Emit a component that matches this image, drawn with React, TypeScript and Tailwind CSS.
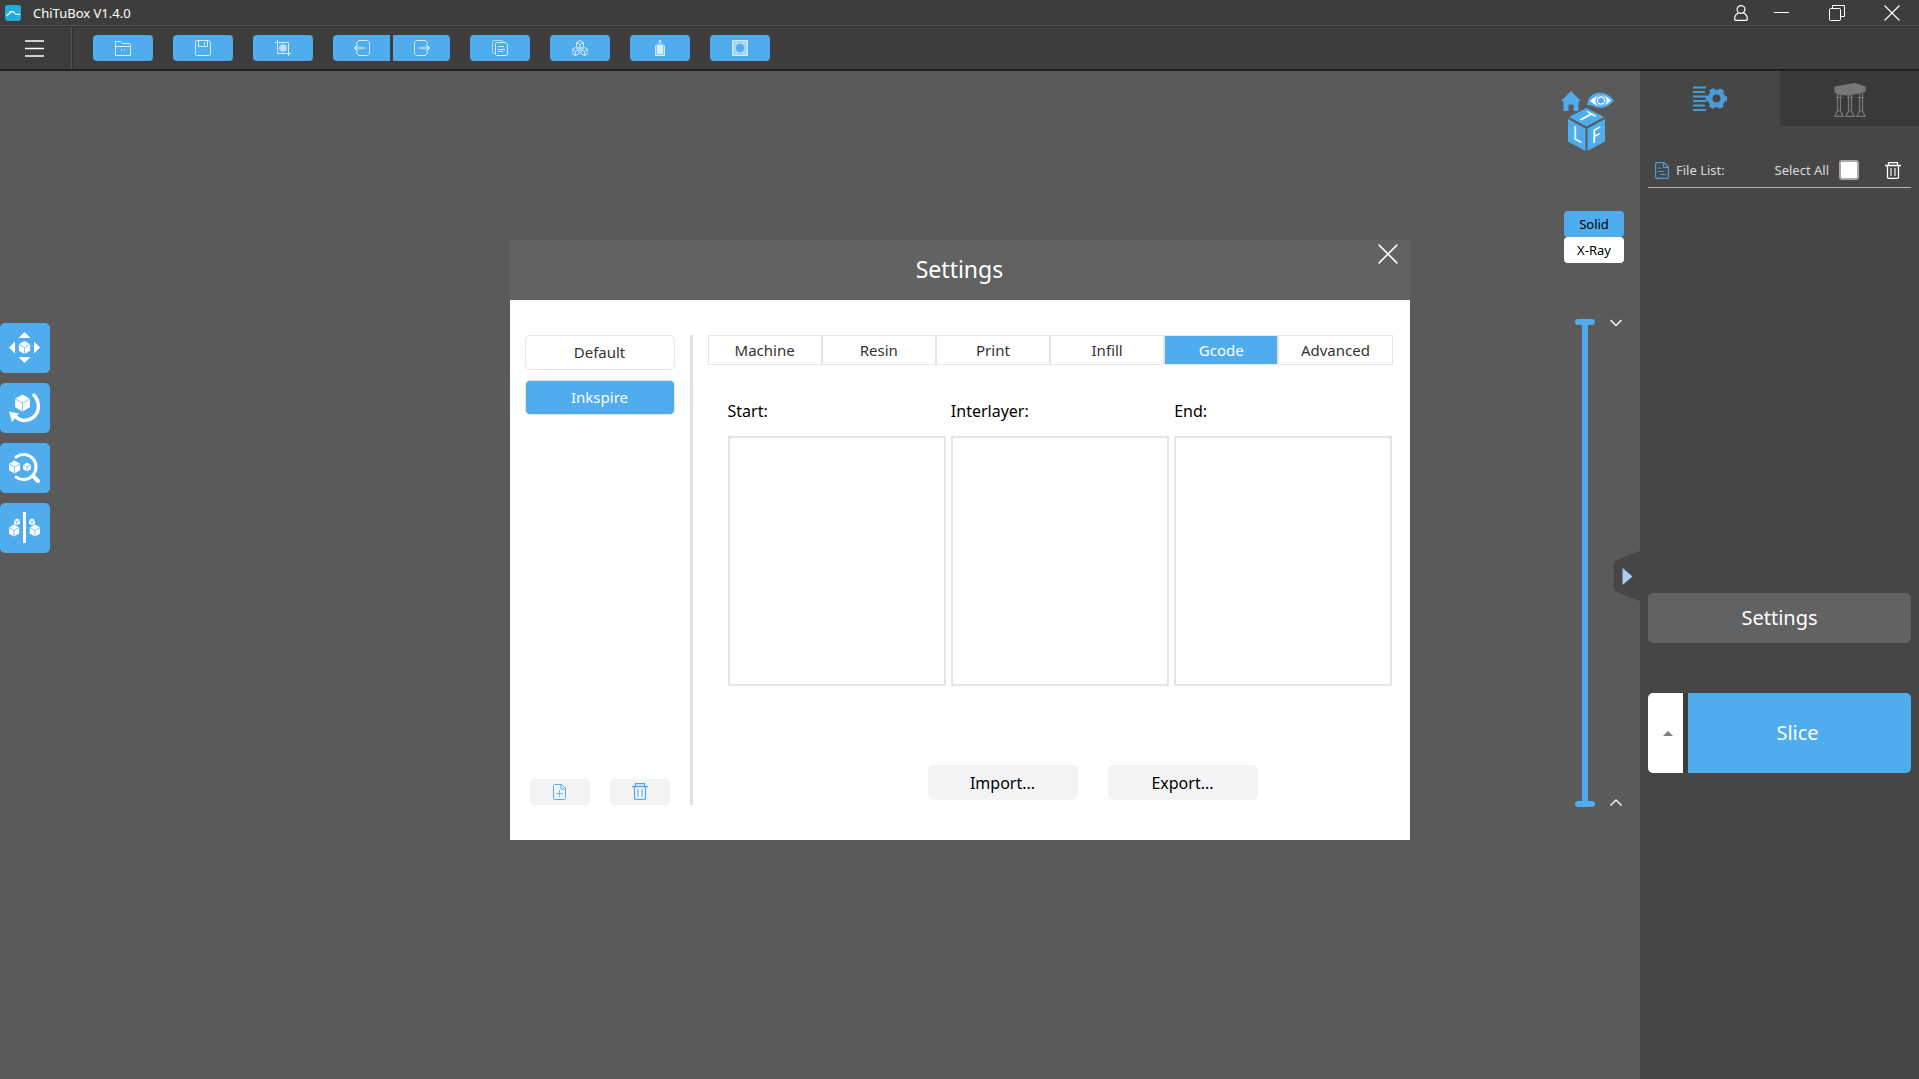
import clsx from 'clsx';
import { ReactNode, useState } from 'react';

const presets = ['Default', 'Inkspire'];
const settingsTabs = ['Machine', 'Resin', 'Print', 'Infill', 'Gcode', 'Advanced'];
const gcodeFields = [
  { id: 'start', label: 'Start:' },
  { id: 'interlayer', label: 'Interlayer:' },
  { id: 'end', label: 'End:' },
];

type IconProps = { className?: string };

// Solid cube seen from the corner, its edges cut out in the button colour
function Cube({ x, y, r, line = 0.7 }: { x: number; y: number; r: number; line?: number }) {
  const w = r * 0.87;
  const h = r / 2;
  return (
    <g>
      <path
        d={`M${x} ${y - r}L${x + w} ${y - h}V${y + h}L${x} ${y + r}L${x - w} ${y + h}V${y - h}Z`}
        fill="#fff"
      />
      <path
        d={`M${x - w} ${y - h}L${x} ${y}L${x + w} ${y - h}M${x} ${y}V${y + r}`}
        fill="none"
        stroke="#4fadee"
        strokeWidth={line}
      />
    </g>
  );
}

function WireCube({ x, y }: { x: number; y: number }) {
  return (
    <path
      d={`M${x} ${y - 4}L${x + 3.5} ${y - 2}V${y + 2}L${x} ${y + 4}L${x - 3.5} ${y + 2}V${y - 2}ZM${x - 3.5} ${y - 2}L${x} ${y}L${x + 3.5} ${y - 2}M${x} ${y}V${y + 4}`}
    />
  );
}

function ToolbarSvg({ children }: { children: ReactNode }) {
  return (
    <svg width="16" height="16" viewBox="0 0 16 16" fill="none" stroke="#d8edfb" strokeWidth="1">
      {children}
    </svg>
  );
}

const toolbarGroups = [
  [
    {
      label: 'Open',
      icon: (
        <ToolbarSvg>
          <path d="M.5 15.500V1.500H5.500L7.500 3.500H14.500L15.500 4.500V15.500ZM.5 6.500H15.500" />
          <path d="M6.500 9V11M9.500 9V11" opacity=".7" />
        </ToolbarSvg>
      ),
    },
  ],
  [
    {
      label: 'Save',
      icon: (
        <ToolbarSvg>
          <path d="M1.500 .5H13.500L15.500 2.500V14.500L14.500 15.500H1.500L.5 14.500V1.500Z" />
          <path d="M3.500 .5V6.500H12.500V.5M9.500 2V5" />
        </ToolbarSvg>
      ),
    },
  ],
  [
    {
      label: 'Screenshot',
      icon: (
        <ToolbarSvg>
          <path d="M2.500 0V13.500H16M0 2.500H13.500V16" />
          <path d="M8 4L11.500 6V10L8 12L4.500 10V6Z" fill="#c3e2f9" stroke="#9fd2f6" />
        </ToolbarSvg>
      ),
    },
  ],
  [
    {
      label: 'Undo',
      icon: (
        <ToolbarSvg>
          <path d="M2.500 4V2.500L4.500 .5H13.500L15.500 2.500V13.500L13.500 15.500H4.500L2.500 13.500V12" />
          <path d="M11 8H1M4 4.500L.5 8L4 11.500" strokeWidth="1.500" opacity=".8" />
        </ToolbarSvg>
      ),
    },
    {
      label: 'Redo',
      icon: (
        <ToolbarSvg>
          <path d="M13.500 4V2.500L11.500 .5H2.500L.5 2.500V13.500L2.500 15.500H11.500L13.500 13.500V12" />
          <path d="M5 8H15M12 4.500L15.500 8L12 11.500" strokeWidth="1.500" opacity=".8" />
        </ToolbarSvg>
      ),
    },
  ],
  [
    {
      label: 'Copy',
      icon: (
        <ToolbarSvg>
          <path d="M3.500 13.500H2L.5 12V1.500L1.500 .5H10L11.500 2" opacity=".75" />
          <path d="M4.500 2.500H13.500L15.500 4.500V14.500L14.500 15.500H4.500L3.500 14.500V3.500Z" />
          <path d="M6 6.500H12M6 9.500H13M6 11.500H11" />
        </ToolbarSvg>
      ),
    },
  ],
  [
    {
      label: 'Auto layout',
      icon: (
        <ToolbarSvg>
          <WireCube x={8} y={4.5} />
          <WireCube x={3.5} y={11.5} />
          <WireCube x={12.5} y={11.5} />
        </ToolbarSvg>
      ),
    },
  ],
  [
    {
      label: 'Hollow',
      icon: (
        <ToolbarSvg>
          <path d="M7 0H9V2H7Z" fill="#d8edfb" stroke="none" />
          <path d="M6 1.500H10V4H11.500L13 5.500V15.500H3V5.500L4.500 4H6Z" fill="#8ccaf4" stroke="none" />
          <path d="M5 5H11V14H5Z" fill="#d8edfb" stroke="none" />
          <path d="M3.500 6V15.500H12.500V6" />
        </ToolbarSvg>
      ),
    },
  ],
  [
    {
      label: 'Dig hole',
      icon: (
        <ToolbarSvg>
          <path d="M.5 .5H15.500V15.500H.5Z" fill="#a7d6f7" />
          <circle cx="8" cy="8" r="4" fill="#4fadee" stroke="none" />
        </ToolbarSvg>
      ),
    },
  ],
];

const modelTools = [
  {
    label: 'Move',
    icon: (
      <>
        <path d="M15.500 0L21.500 6H9.500ZM15.500 31L21.500 25H9.500ZM0 15.500L6 9.500V21.500ZM31 15.500L25 9.500V21.500Z" fill="#fff" />
        <Cube x={15.5} y={15.5} r={6.5} />
      </>
    ),
  },
  {
    label: 'Rotate',
    icon: (
      <>
        <path d="M25 3C31 10 31 20 24 25.500C18 30 11 29 7 25" fill="none" stroke="#fff" strokeWidth="3.500" strokeLinecap="round" />
        <path d="M0 19.500L10 21.500L3 30Z" fill="#fff" />
        <Cube x={13.5} y={11} r={8.5} />
      </>
    ),
  },
  {
    label: 'Scale',
    icon: (
      <>
        <path d="M7 5A12.500 12.500 0 1 1 7 25" fill="none" stroke="#fff" strokeWidth="3" strokeLinecap="round" />
        <path d="M24 24L29 29" stroke="#fff" strokeWidth="4" strokeLinecap="round" />
        <Cube x={5.5} y={15} r={6.5} />
        <Cube x={18} y={15} r={4.5} />
      </>
    ),
  },
  {
    label: 'Mirror',
    icon: (
      <>
        <path d="M15.500 0V31" stroke="#fff" strokeWidth="3" />
        <Cube x={8} y={10} r={3.5} />
        <Cube x={5} y={18.5} r={6} />
        <Cube x={23} y={10} r={3.5} />
        <Cube x={26} y={18.5} r={6} />
      </>
    ),
  },
];

function TrashIcon({ className }: IconProps) {
  return (
    <svg className={className} width="16" height="17" viewBox="0 0 16 17" fill="none" stroke="currentColor">
      <path d="M0 3.500H16M3.500 3V.5H12.500V3M2.500 4V15.500L3.500 16.500H12.500L13.500 15.500V4" strokeWidth="1.300" />
      <path d="M6 6V14M10 6V14" strokeWidth="1.500" opacity=".75" />
    </svg>
  );
}

function FilePlusIcon() {
  return (
    <svg width="14" height="16" viewBox="0 0 14 16" fill="none" stroke="#4fadee">
      <path d="M1.500 .5H8.500L12.500 4.500V14.500L11.500 15.500H1.500L.5 14.500V1.500ZM8 .5V5H12.500" />
      <path d="M6.500 6V13M3 9.500H10" opacity=".8" />
    </svg>
  );
}

function CloseIcon({ size }: { size: number }) {
  return (
    <svg width={size} height={size} viewBox="0 0 16 16" stroke="#fff" strokeWidth="1.200">
      <path d="M.5 .5L15.500 15.500M15.500 .5L.5 15.500" />
    </svg>
  );
}

function TitleBar() {
  return (
    <header className="flex h-[27px] items-center border-b border-[#2f2f2f] bg-[#3d3d3d] pl-[5px] shadow-[inset_0_-1px_0_#555555]">
      <svg width="16" height="16" viewBox="0 0 16 16">
        <rect width="16" height="16" rx="3" fill="#21aedd" />
        <path d="M1 10.500C3 10 4 9.500 5 8C6.500 6 9 6.500 10 8.500C11 10 13 9 15 9.500M4 7.500C5.500 6.500 7 6 9 7" fill="none" stroke="#fff" strokeWidth="1.200" />
      </svg>
      <h1 className="ml-3 flex-1 text-[13px] leading-5 text-white">ChiTuBox V1.4.0</h1>
      <button type="button" aria-label="Account" className="flex w-6 justify-center">
        <svg width="14" height="16" viewBox="0 0 14 16" fill="none" stroke="#fff" strokeWidth="1.200">
          <circle cx="7" cy="4.500" r="3.900" />
          <path d="M4.500 8C2 9 .6 11 .6 14.500L1.500 15.400H12.500L13.400 14.500C13.400 11 12 9 9.500 8" />
        </svg>
      </button>
      <button type="button" aria-label="Minimize" className="flex w-14 justify-center">
        <svg width="15" height="16" viewBox="0 0 15 16" stroke="#fff">
          <path d="M0 7.500H15" />
        </svg>
      </button>
      <button type="button" aria-label="Restore" className="flex w-14 justify-center">
        <svg width="16" height="16" viewBox="0 0 16 16" fill="none" stroke="#fff">
          <path d="M3.500 3.500V.5H15.500V11.500H12" />
          <rect x=".5" y="3.500" width="11" height="12" rx="1" />
        </svg>
      </button>
      <button type="button" aria-label="Close" className="flex w-[54px] justify-center">
        <CloseIcon size={16} />
      </button>
    </header>
  );
}

function Toolbar() {
  return (
    <nav className="flex h-11 items-center border-b-2 border-[#1f1f1f] bg-[#3d3d3d]">
      <div className="flex h-full w-[73px] items-center border-r border-[#2f2f2f] pl-[25px] shadow-[inset_-1px_0_0_#555555]">
        <button type="button" aria-label="Menu">
          <svg width="19" height="17" viewBox="0 0 19 17" stroke="#fff" strokeWidth="1.500">
            <path d="M0 1H19M0 8.500H19M0 16H19" />
          </svg>
        </button>
      </div>
      <div className="ml-5 flex gap-5">
        {toolbarGroups.map((group) => (
          <div key={group[0].label} className="flex gap-[3px] overflow-hidden rounded-[4px]">
            {group.map(({ label, icon }) => (
              <button
                key={label}
                type="button"
                aria-label={label}
                className={clsx(
                  'flex h-[26px] items-center justify-center bg-[#4fadee]',
                  group.length > 1 ? 'w-[57px]' : 'w-[60px]'
                )}
              >
                {icon}
              </button>
            ))}
          </div>
        ))}
      </div>
    </nav>
  );
}

function ViewCube() {
  return (
    <svg width="54" height="62" viewBox="0 0 54 62" fill="#4fadee">
      <path d="M10 0L20 10H17.500V20H12.500V13.500H7.500V20H2.500V10H0Z" />
      <path d="M26 14Q27 5 34 2.500Q45 -1 53 9.500Q44 20 34 16L31 14.500Z" />
      <path d="M29 10Q40 -1 50 9.500Q40 20 29 10Z" fill="#fff" />
      <circle cx="40" cy="9.500" r="5.500" />
      <circle cx="40" cy="9.500" r="4.200" fill="#fff" />
      <circle cx="40" cy="9.500" r="3" />
      <path d="M25.500 17L43 26L25.500 35.500L8 26Z" />
      <path d="M7 28L24.500 37.500V60L7 50.500Z" />
      <path d="M44 28L26.500 37.500V60L44 50.500Z" />
      <g fill="#fff" fontSize="19">
        <text textAnchor="middle" transform="matrix(.87 .48 -.87 .48 19 29)">T</text>
        <text textAnchor="middle" transform="matrix(.87 .48 0 1 16 50)">L</text>
        <text textAnchor="middle" transform="matrix(.87 -.48 0 1 35 51)">F</text>
      </g>
    </svg>
  );
}

const rangeClass =
  'pointer-events-none absolute inset-0 m-0 h-full w-full appearance-none bg-transparent [direction:rtl] [writing-mode:vertical-lr] [&::-webkit-slider-thumb]:pointer-events-auto [&::-webkit-slider-thumb]:h-[6px] [&::-webkit-slider-thumb]:w-5 [&::-webkit-slider-thumb]:appearance-none [&::-webkit-slider-thumb]:rounded-full [&::-webkit-slider-thumb]:bg-[#4fadee]';

function LayerSlider() {
  const [top, setTop] = useState(100);
  const [bottom, setBottom] = useState(0);

  return (
    <div className="mt-14 ml-[14px] flex justify-between">
      <div className="relative flex h-[488px] w-5 justify-center">
        <div className="w-[6px] rounded-full bg-[#4fadee]" />
        <input
          type="range"
          aria-label="Top layer"
          value={top}
          onChange={(e) => setTop(Number(e.target.value))}
          className={rangeClass}
        />
        <input
          type="range"
          aria-label="Bottom layer"
          value={bottom}
          onChange={(e) => setBottom(Number(e.target.value))}
          className={rangeClass}
        />
      </div>
      <div className="flex flex-col justify-between">
        <button type="button" aria-label="Layer down">
          <svg width="12" height="8" viewBox="0 0 12 8" fill="none" stroke="#fff" strokeWidth="1.400">
            <path d="M.5 1L6 6.500L11.500 1" />
          </svg>
        </button>
        <button type="button" aria-label="Layer up">
          <svg width="12" height="8" viewBox="0 0 12 8" fill="none" stroke="#fff" strokeWidth="1.400">
            <path d="M.5 6.500L6 1L11.500 6.500" />
          </svg>
        </button>
      </div>
    </div>
  );
}

function Viewport() {
  const [mode, setMode] = useState('Solid');

  return (
    <main className="relative flex flex-1 justify-between bg-[#5a5a5a]">
      <div className="flex flex-col gap-[10px] pt-[252px]">
        {modelTools.map(({ label, icon }) => (
          <button
            key={label}
            type="button"
            aria-label={label}
            className="flex size-[50px] items-center justify-center rounded-[5px] bg-[#4fadee] pr-[2px] pb-[2px]"
          >
            <svg width="31" height="31" viewBox="0 0 31 31">
              {icon}
            </svg>
          </button>
        ))}
      </div>

      <div className="w-[79px] pt-5">
        <ViewCube />
        <div className="mt-[58px] ml-[3px] flex w-[60px] flex-col">
          {['Solid', 'X-Ray'].map((m) => (
            <button
              key={m}
              type="button"
              onClick={() => setMode(m)}
              className={clsx(
                'h-[26px] rounded-[4px] pt-px text-[13px] text-black',
                mode === m ? 'bg-[#4fadee]' : 'bg-white'
              )}
            >
              {m}
            </button>
          ))}
        </div>
        <div className="w-[61px]">
          <LayerSlider />
        </div>
      </div>

      {/* handle that folds the side panel away */}
      <button type="button" aria-label="Toggle panel" className="absolute top-[480px] right-0">
        <svg width="26" height="50" viewBox="0 0 26 50">
          <path d="M26 0L2 9Q0 10 0 13V37Q0 40 2 41L26 50Z" fill="#464646" />
          <path d="M8.500 17L18.500 25.500L8.500 34Z" fill="#abccf3" />
        </svg>
      </button>
    </main>
  );
}

function SidePanel() {
  return (
    <aside className="w-[279px] bg-[#464646]">
      <div className="flex h-[55px]">
        <button type="button" aria-label="File settings" className="flex w-[140px] items-center justify-center">
          <svg width="34" height="26" viewBox="0 0 34 26" fill="none" stroke="#4b9cd6">
            <path d="M0 1.500H13M0 6H12M0 10.500H13M0 15H13M0 19.500H12M0 24H13" strokeWidth="2" />
            <circle cx="23.500" cy="12.500" r="6.500" strokeWidth="5" />
            <circle cx="23.500" cy="12.500" r="9" strokeWidth="3.500" strokeDasharray="5 4.425" strokeDashoffset="2.500" />
          </svg>
        </button>
        <button type="button" aria-label="Supports" className="flex flex-1 items-center justify-center bg-[#3a3a3a] pt-[2px]">
          <svg width="32" height="34" viewBox="0 0 32 34" fill="none" stroke="#777" strokeWidth="1.200">
            <path d="M1 4L21 .5L31 4V8.500L16 12L5 11.500L1 9Z" fill="#777" />
            <path d="M3.500 11V28L.8 33.400H9.200L6.500 28V11M14.500 12V28L11.800 33.400H20.200L17.500 28V12M25.500 10V28L22.800 33.400H31.200L28.500 28V10M2 14.500H8M13 14.500H19M24 14.500H30M3.500 28H6.500M14.500 28H17.500M25.500 28H28.500" />
          </svg>
        </button>
      </div>

      <div className="mx-2 mt-[34px] flex items-center border-b border-[#b4b4b4] pr-[10px] pb-[7px] pl-[7px] text-[13px] leading-5 text-[#dcdcdc]">
        <svg width="14" height="17" viewBox="0 0 14 17" fill="none" stroke="#4b9cd6" strokeWidth="1.200">
          <path d="M1.500 .6H9L13.400 5V15.500L12.500 16.400H1.500L.6 15.500V1.500ZM8.500 .6V5.500H13.400M3 6H6M3 9.500H9M5 12.500H11" />
        </svg>
        <h2 className="ml-[7px] flex-1">File List:</h2>
        <label htmlFor="select-all">Select All</label>
        <input
          id="select-all"
          type="checkbox"
          className="ml-[10px] size-5 appearance-none rounded-[3px] border-2 border-[#a8a8a8] bg-white checked:bg-[#4fadee]"
        />
        <button type="button" aria-label="Delete files" className="ml-[26px] text-white">
          <TrashIcon />
        </button>
      </div>

      <ul className="h-[405px]" />

      <div className="px-2 text-xl text-white">
        <button type="button" className="h-[50px] w-full rounded-[5px] bg-[#606263]">
          Settings
        </button>
        <div className="mt-[50px] flex h-20 gap-[5px] overflow-hidden rounded-[5px] bg-[#3d3d3d]">
          <button type="button" aria-label="Slice options" className="flex w-[35px] items-center justify-center bg-white pl-1">
            <svg width="10" height="5" viewBox="0 0 10 5" fill="#7f7f7f">
              <path d="M0 5L5 0L10 5Z" />
            </svg>
          </button>
          <button type="button" className="flex-1 bg-[#4fadee] pr-1">
            Slice
          </button>
        </div>
      </div>
    </aside>
  );
}

function SettingsDialog() {
  const [preset, setPreset] = useState('Inkspire');
  const [tab, setTab] = useState('Gcode');

  return (
    <div className="fixed inset-0 flex items-center justify-center">
      <div role="dialog" aria-labelledby="settings-title" className="w-[900px] bg-white">
        <div className="relative flex h-[60px] items-center justify-center bg-[#606263] text-white">
          <h2 id="settings-title" className="text-[23px]">
            Settings
          </h2>
          <button type="button" aria-label="Close settings" className="absolute top-1 right-3">
            <CloseIcon size={20} />
          </button>
        </div>

        <div className="flex h-[540px] py-[35px] pr-[17px] pl-[15px]">
          <div className="flex w-[150px] flex-col gap-[10px] text-[15px]">
            {presets.map((name) => (
              <button
                key={name}
                type="button"
                onClick={() => setPreset(name)}
                className={clsx(
                  'h-[35px] rounded-[5px] border border-[#e4e4ea] pt-px',
                  preset === name ? 'bg-[#4fadee] text-white' : 'bg-white text-[#333]'
                )}
              >
                {name}
              </button>
            ))}
            <div className="mt-auto flex justify-between px-[5px]">
              <button type="button" aria-label="Add profile" className="flex h-[26px] w-[60px] items-center justify-center rounded-[5px] bg-[#f4f4f7]">
                <FilePlusIcon />
              </button>
              <button type="button" aria-label="Delete profile" className="flex h-[26px] w-[60px] items-center justify-center rounded-[5px] bg-[#f4f4f7]">
                <TrashIcon className="text-[#4fadee]" />
              </button>
            </div>
          </div>

          <div className="mr-[15px] ml-[15px] w-[3px] bg-[#e0e0e6]" />

          <div className="flex flex-1 flex-col">
            <div role="tablist" className="flex h-[30px] divide-x-2 divide-[#e4e4ea] border border-[#e4e4ea] text-[15px]">
              {settingsTabs.map((name) => (
                <button
                  key={name}
                  type="button"
                  role="tab"
                  aria-selected={tab === name}
                  onClick={() => setTab(name)}
                  className={clsx('flex-1 basis-0 pt-px', tab === name ? 'bg-[#4fadee] text-white' : 'text-[#333]')}
                >
                  {name}
                </button>
              ))}
            </div>

            <div className="mt-[34px] flex gap-[5px] pl-5">
              {gcodeFields.map(({ id, label }) => (
                <div key={id} className="flex flex-1 flex-col gap-[13px]">
                  <label htmlFor={id} className="text-base text-black">
                    {label}
                  </label>
                  <textarea id={id} className="h-[250px] resize-none border-2 border-[#e4e4ea] p-2 text-sm outline-none" />
                </div>
              ))}
            </div>

            <div className="mt-[79px] flex justify-center gap-[30px] pl-[85px] text-base text-black">
              <button type="button" className="h-[35px] w-[150px] rounded-[5px] bg-[#f4f4f7] pt-px">
                Import...
              </button>
              <button type="button" className="h-[35px] w-[150px] rounded-[5px] bg-[#f4f4f7] pt-px">
                Export...
              </button>
            </div>
          </div>
        </div>
      </div>
    </div>
  );
}

export default function App() {
  return (
    <div className="flex min-h-screen flex-col bg-[#5a5a5a] font-['Noto_Sans',sans-serif]">
      <TitleBar />
      <Toolbar />
      <div className="flex flex-1">
        <Viewport />
        <SidePanel />
      </div>
      <SettingsDialog />
    </div>
  );
}
